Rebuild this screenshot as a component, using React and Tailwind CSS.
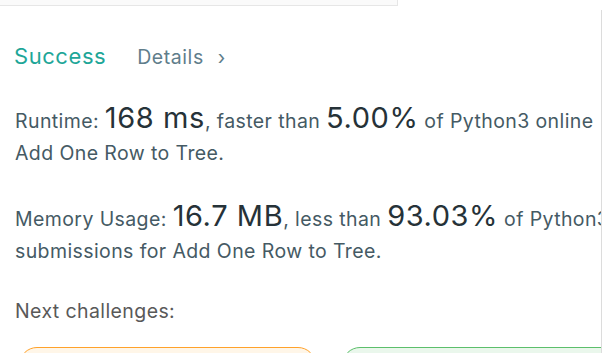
import React from 'react';

const Line = ({ children, className = '' }) => (
  <div className={`whitespace-nowrap ${className}`}>{children}</div>
);

const Big = ({ children }) => (
  <span className="text-[29px] tracking-[0.02em] text-[#263238]">{children}</span>
);

export default function App() {
  return (
    <div className="w-[603px] h-[353px] overflow-hidden bg-white font-['Inter',sans-serif] tracking-[0.025em]">
      <div className="w-[602px] h-full overflow-hidden relative">
        <div className="absolute right-0 top-[10px] bottom-0 w-px bg-[#dcdcdc]" />
        <div className="w-[398px] h-[6px] bg-[#fafafa] border-b border-r border-[#e6e6e6]" />

        <div className="flex items-baseline pl-[14px] pt-[34px] tracking-[0.035em]">
          <span className="text-[22px] text-[#1ea698]">Success</span>
          <span className="ml-[31px] text-[19.5px] text-[#607d8b]">Details</span>
          <span className="ml-[14px] text-[19.5px] text-[#607d8b]">›</span>
        </div>

        <div className="mt-[29px] pl-[15px] text-[19.5px] text-[#455a64] leading-[32px]">
          <Line>
            Runtime: <Big>168 ms</Big>, faster than <Big>5.00%</Big> of Python3 online{' '}
            <span className="ml-[12px]">submissions for</span>
          </Line>
          <Line>Add One Row to Tree.</Line>
        </div>

        <div className="mt-[31px] pl-[15px] text-[19.5px] text-[#455a64] leading-[32px]">
          <Line>
            Memory Usage: <Big>16.7 MB</Big>, less than <Big>93.03%</Big> of Python3 online
          </Line>
          <Line>submissions for Add One Row to Tree.</Line>
        </div>

        <div className="mt-[28px] pl-[15px] text-[19.5px] text-[#595959] leading-[32px]">
          Next challenges:
        </div>

        <div className="mt-[20px] flex gap-[26px] pl-[19px]">
          <div className="w-[297px] h-[44px] shrink-0 rounded-[18px] border border-[#ffa22b] bg-[#fff6e8]" />
          <div className="w-[297px] h-[44px] shrink-0 rounded-[18px] border border-[#5cbf6b] bg-[#eaf7ec]" />
        </div>
      </div>
    </div>
  );
}
